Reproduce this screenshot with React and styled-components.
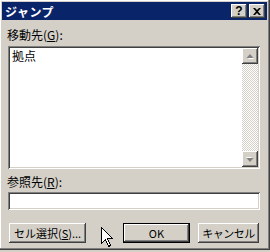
import styled, { createGlobalStyle } from 'styled-components';

const GlobalStyle = createGlobalStyle`
    html, body {
        margin: 0;
        padding: 0;
        background: #d4d0c8;
    }
    body {
        font-family: "Noto Sans CJK JP", "Liberation Sans", sans-serif;
        font-size: 12px;
        color: #000;
    }
`;

const raised = `
    box-shadow: inset -1px -1px #404040, inset 1px 1px #ffffff,
        inset -2px -2px #808080, inset 2px 2px #d4d0c8;
`;

const sunken = `
    box-shadow: inset 1px 1px #808080, inset -1px -1px #ffffff,
        inset 2px 2px #404040, inset -2px -2px #d4d0c8;
`;

const Mnemonic = styled.u`
    text-underline-offset: 1px;
`;

const ScrollArrow = ({ down }) => (
    <svg width="8" height="5" viewBox="0 0 8 5">
        <g transform={down ? 'rotate(180 4 2.5)' : undefined}>
            <polygon points="4,1 7,4 1,4" fill="#ffffff" transform="translate(1 1)" />
            <polygon points="4,0 7.5,4 0.5,4" fill="#808080" />
        </g>
    </svg>
);

const Cursor = () => (
    <svg width="14" height="22" viewBox="0 0 14 22">
        <path
            d="M0.5 0.5 L0.5 16.5 L4.5 12.5 L7.5 19.5 L9.5 18.5 L6.5 11.5 L11.5 11.5 Z"
            fill="#ffffff"
            stroke="#000000"
            strokeWidth="1"
            shapeRendering="crispEdges"
        />
    </svg>
);

const App = () => {
    return (
        <>
            <GlobalStyle />
            <Window>
                <TitleBar>
                    <Title>ジャンプ</Title>
                    <TitleButtons>
                        <CaptionButton>?</CaptionButton>
                        <CaptionButton close>
                            <svg width="8" height="7" viewBox="0 0 8 7">
                                <path d="M0 0h2l2 2 2-2h2L5 3.5 8 7H6L4 5 2 7H0l3-3.5z" fill="#000" />
                            </svg>
                        </CaptionButton>
                    </TitleButtons>
                </TitleBar>
                <Body>
                    <Label>
                        移動先(<Mnemonic>G</Mnemonic>):
                    </Label>
                    <ListBox>
                        <ListItems>
                            <ListItem>拠点</ListItem>
                        </ListItems>
                        <ScrollBar>
                            <ScrollButton>
                                <ScrollArrow />
                            </ScrollButton>
                            <ScrollTrack />
                            <ScrollButton>
                                <ScrollArrow down />
                            </ScrollButton>
                        </ScrollBar>
                    </ListBox>
                    <Label small>
                        参照先(<Mnemonic>R</Mnemonic>):
                    </Label>
                    <TextInput />
                    <ButtonRow>
                        <PushButton wide>
                            セル選択(<Mnemonic>S</Mnemonic>)...
                        </PushButton>
                        <RightButtons>
                            <DefaultFrame>
                                <PushButton ok>OK</PushButton>
                            </DefaultFrame>
                            <PushButton cancel>キャンセル</PushButton>
                        </RightButtons>
                        <CursorSpot>
                            <Cursor />
                        </CursorSpot>
                    </ButtonRow>
                </Body>
            </Window>
        </>
    );
};

export default App;

const Window = styled.div`
    position: relative;
    box-sizing: border-box;
    width: 271px;
    height: 251px;
    margin: -1px 0 0 -1px;
    padding: 3px;
    background: #d4d0c8;
    box-shadow: inset -1px -1px #404040, inset 1px 1px #d4d0c8,
        inset -2px -2px #808080, inset 2px 2px #ffffff;
    display: flex;
    flex-direction: column;
`;

const TitleBar = styled.div`
    height: 18px;
    background: #0a246a;
    display: flex;
    align-items: center;
    justify-content: space-between;
    padding: 0 2px 0 3px;
`;

const Title = styled.span`
    color: #fff;
    font-weight: bold;
    font-size: 12px;
    letter-spacing: 0.5px;
`;

const TitleButtons = styled.div`
    display: flex;
    gap: 2px;
`;

const CaptionButton = styled.div`
    box-sizing: border-box;
    width: 16px;
    height: 14px;
    background: #d4d0c8;
    ${raised}
    display: flex;
    align-items: center;
    justify-content: center;
    font-family: "Liberation Sans", sans-serif;
    font-weight: bold;
    font-size: 12px;
    line-height: 1;
    padding-right: ${(p) => (p.close ? '1px' : '0')};
`;

const Body = styled.div`
    flex: 1;
    display: flex;
    flex-direction: column;
    padding: 0 7px 0 6px;
`;

const Label = styled.div`
    height: ${(p) => (p.small ? '23px' : '26px')};
    padding-top: ${(p) => (p.small ? '2px' : '3px')};
    box-sizing: border-box;
    display: flex;
    align-items: center;
    margin-left: -1px;
    line-height: 1;
`;

const ListBox = styled.div`
    box-sizing: border-box;
    height: 123px;
    background: #fff;
    padding: 2px;
    ${sunken}
    display: flex;
`;

const ListItems = styled.div`
    flex: 1;
    padding: 0 2px;
`;

const ListItem = styled.div`
    line-height: 13px;
    padding-top: 1px;
`;

const ScrollBar = styled.div`
    width: 16px;
    display: flex;
    flex-direction: column;
`;

const ScrollButton = styled.div`
    box-sizing: border-box;
    height: 16px;
    background: #d4d0c8;
    ${raised}
    display: flex;
    align-items: center;
    justify-content: center;
`;

const ScrollTrack = styled.div`
    flex: 1;
    background: repeating-conic-gradient(#ffffff 0 25%, #d4d0c8 0 50%) 0 0 / 2px 2px;
`;

const TextInput = styled.div`
    box-sizing: border-box;
    height: 18px;
    background: #fff;
    ${sunken}
`;

const ButtonRow = styled.div`
    position: relative;
    display: flex;
    justify-content: space-between;
    align-items: center;
    margin-top: 13px;
    padding: 0 1px 0 1px;
`;

const RightButtons = styled.div`
    display: flex;
    align-items: center;
    gap: 8px;
`;

const DefaultFrame = styled.div`
    border: 1px solid #000;
    display: flex;
`;

const PushButton = styled.div`
    box-sizing: border-box;
    height: ${(p) => (p.ok ? '18px' : '20px')};
    width: ${(p) => (p.wide ? '77px' : p.ok ? '65px' : '61px')};
    background: #d4d0c8;
    ${raised}
    display: flex;
    align-items: center;
    justify-content: center;
    line-height: 1;
    padding-top: 1px;
    font-size: 11px;
    white-space: nowrap;
    letter-spacing: ${(p) => (p.cancel ? '-0.5px' : '0')};
`;

const CursorSpot = styled.div`
    position: absolute;
    left: 93px;
    top: 4px;
    line-height: 0;
`;
